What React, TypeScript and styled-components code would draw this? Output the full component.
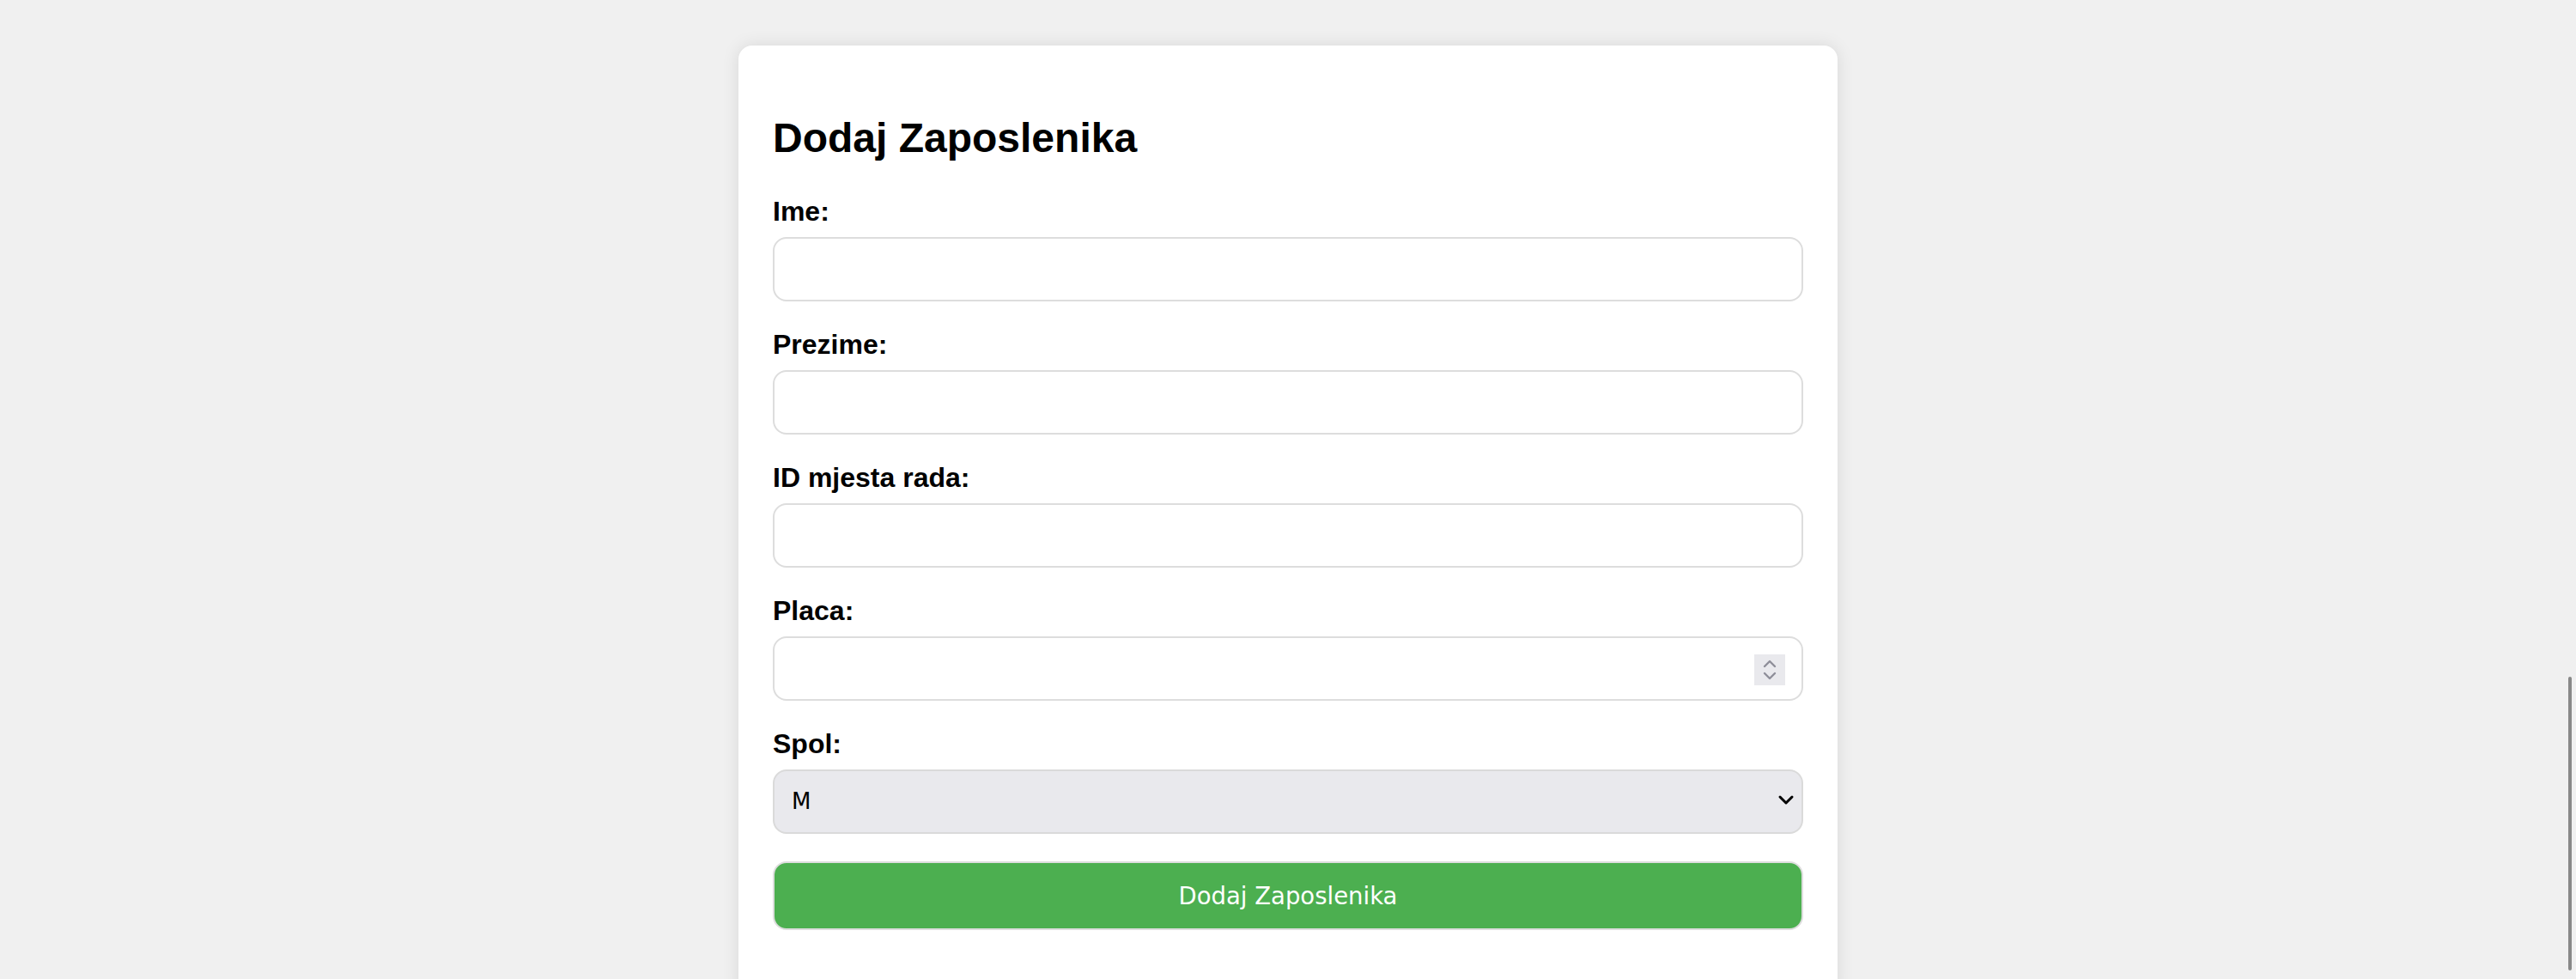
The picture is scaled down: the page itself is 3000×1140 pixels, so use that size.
import React from "react";
import styled, { createGlobalStyle } from "styled-components";

const GlobalStyle = createGlobalStyle`
  html, body {
    margin: 0;
    padding: 0;
    overflow: hidden;
    background: #f0f0f0;
    font-family: "Liberation Sans", Arial, sans-serif;
  }
  * { box-sizing: border-box; }
`;

const Page = styled.div`
  display: flex;
  justify-content: center;
  padding-top: 53px;
  min-height: 1140px;
`;

const Card = styled.div`
  width: 1280px;
  background: #ffffff;
  border-radius: 16px;
  box-shadow: 0 0 20px rgba(0, 0, 0, 0.1);
  padding: 40px 40px 80px;
`;

const Title = styled.h2`
  font-family: "Liberation Sans", Arial, sans-serif;
  font-size: 48px;
  font-weight: bold;
  color: #000;
  margin: 0.83em 0;
`;

const Form = styled.form`
  display: flex;
  flex-direction: column;
`;

const Label = styled.label`
  display: block;
  font-size: 32px;
  font-weight: bold;
  color: #000;
  margin-bottom: 11px;
`;

const FieldBox = styled.div`
  position: relative;
  margin-bottom: 32px;
`;

const TextInput = styled.input`
  display: block;
  width: 100%;
  height: 75px;
  border: 2px solid #dddddd;
  border-radius: 16px;
  padding: 0 20px;
  background: #ffffff;
  font-family: "DejaVu Sans", sans-serif;
  font-size: 26px;
  outline: none;
  -moz-appearance: textfield;
  &::-webkit-inner-spin-button,
  &::-webkit-outer-spin-button {
    -webkit-appearance: none;
    margin: 0;
  }
`;

const Spinner = styled.div`
  position: absolute;
  right: 21px;
  top: 21px;
  width: 36px;
  height: 36px;
  background: #e9e9ed;
  display: flex;
  align-items: center;
  justify-content: center;
  pointer-events: none;
`;

const Select = styled.select`
  display: block;
  width: 100%;
  height: 75px;
  border: 2px solid #dadada;
  border-radius: 16px;
  padding: 0 20px;
  background: #e9e9ed;
  color: #000;
  font-family: "DejaVu Sans", sans-serif;
  font-size: 26px;
  appearance: none;
  -webkit-appearance: none;
  outline: none;
`;

const Chevron = styled.svg`
  position: absolute;
  right: 10px;
  top: 28px;
  pointer-events: none;
`;

const SubmitButton = styled.button`
  display: block;
  width: 100%;
  height: 80px;
  border: 2px solid #dddddd;
  border-radius: 16px;
  background: #4caf50;
  color: #ffffff;
  font-family: "DejaVu Sans", Tahoma, sans-serif;
  font-size: 27.5px;
  cursor: pointer;
`;

const ScrollThumb = styled.div`
  position: fixed;
  right: 5px;
  top: 788px;
  width: 4px;
  height: 342px;
  border-radius: 2px;
  background: #888888;
`;

export default function App() {
  return (
    <>
      <GlobalStyle />
      <Page>
        <Card>
          <Title>Dodaj Zaposlenika</Title>
          <Form onSubmit={(e) => e.preventDefault()}>
            <Label htmlFor="ime">Ime:</Label>
            <FieldBox>
              <TextInput id="ime" type="text" />
            </FieldBox>
            <Label htmlFor="prezime">Prezime:</Label>
            <FieldBox>
              <TextInput id="prezime" type="text" />
            </FieldBox>
            <Label htmlFor="mjesto">ID mjesta rada:</Label>
            <FieldBox>
              <TextInput id="mjesto" type="text" />
            </FieldBox>
            <Label htmlFor="placa">Placa:</Label>
            <FieldBox>
              <TextInput id="placa" type="number" />
              <Spinner>
                <svg width="16" height="26" viewBox="0 0 16 26" fill="none">
                  <path d="M2 9 L8 3 L14 9" stroke="#8e8e99" strokeWidth="2.4" strokeLinecap="round" strokeLinejoin="round" />
                  <path d="M2 17 L8 23 L14 17" stroke="#8e8e99" strokeWidth="2.4" strokeLinecap="round" strokeLinejoin="round" />
                </svg>
              </Spinner>
            </FieldBox>
            <Label htmlFor="spol">Spol:</Label>
            <FieldBox>
              <Select id="spol" defaultValue="M">
                <option value="M">M</option>
                <option value="Z">Ž</option>
              </Select>
              <Chevron width="20" height="16" viewBox="0 0 20 16" fill="none">
                <path d="M3 4 L10 11 L17 4" stroke="#000" strokeWidth="3" strokeLinecap="round" strokeLinejoin="round" />
              </Chevron>
            </FieldBox>
            <SubmitButton type="submit">Dodaj Zaposlenika</SubmitButton>
          </Form>
        </Card>
      </Page>
      <ScrollThumb />
    </>
  );
}
